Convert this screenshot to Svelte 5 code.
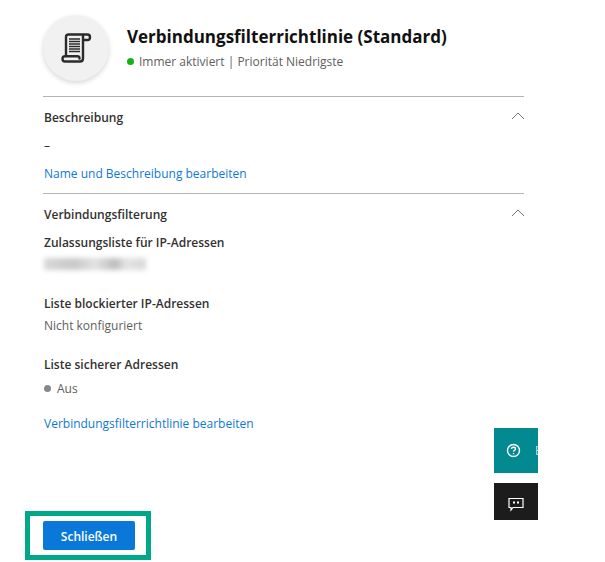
<script>
  const sections = [
    { label: 'Zulassungsliste für IP-Adressen', blurred: true },
    { label: 'Liste blockierter IP-Adressen', value: 'Nicht konfiguriert' },
    { label: 'Liste sicherer Adressen', value: 'Aus', dot: true }
  ];
</script>

<div class="page">
  <main class="panel">
    <header class="head">
      <div class="avatar">
        <svg width="34" height="34" viewBox="0 0 34 34" fill="none" stroke="#2b2b2b" stroke-width="2.400" stroke-linejoin="round" stroke-linecap="round">
          <path d="M7 25V6C7 4.500 8 3.500 9.500 3.500H28.500C30 3.500 31 4.600 31 6.200C31 7.800 30 9 28.500 9H24.500" />
          <path d="M24 4V27.500C24 29.500 23 30.500 21 30.500H6C4.500 30.500 3.500 29.300 3.500 27.800C3.500 26.300 4.500 25.200 6 25.200H18.500C20 25.200 20.500 26.500 20.500 27.500" />
          <path d="M10 8H21M10 10.500H21M10 13H21M10 15.500H21M10 18H21M10 20.500H21" stroke-width="1.600" stroke-linecap="butt" />
        </svg>
      </div>
      <div class="head-text">
        <h1>Verbindungsfilterrichtlinie (Standard)</h1>
        <p class="status"><span class="dot green"></span>Immer aktiviert | Priorität Niedrigste</p>
      </div>
    </header>

    <section class="desc">
      <div class="sec-head">
        <h2>Beschreibung</h2>
        <svg class="chev" width="14" height="8" viewBox="0 0 14 8" fill="none" stroke="#777" stroke-width="1"><path d="M1 7L7 1L13 7" /></svg>
      </div>
      <p class="dash">–</p>
      <a href="#name" class="link">Name und Beschreibung bearbeiten</a>
    </section>

    <section class="filter">
      <div class="sec-head">
        <h2>Verbindungsfilterung</h2>
        <svg class="chev" width="14" height="8" viewBox="0 0 14 8" fill="none" stroke="#777" stroke-width="1"><path d="M1 7L7 1L13 7" /></svg>
      </div>
      {#each sections as s}
        <div class="field">
          <h3>{s.label}</h3>
          {#if s.blurred}
            <div class="smudge"></div>
          {:else}
            <p class="value" class:state={s.dot}>
              {#if s.dot}<span class="dot grey"></span>{/if}{s.value}
            </p>
          {/if}
        </div>
      {/each}
      <a href="#edit" class="link">Verbindungsfilterrichtlinie bearbeiten</a>
    </section>
  </main>

  <div class="float help">
    <svg width="15" height="15" viewBox="0 0 15 15" fill="none" stroke="#fff" stroke-width="1.400">
      <circle cx="7.500" cy="7.500" r="6" />
      <path d="M5.500 6C5.500 4.800 6.400 4.200 7.500 4.200C8.600 4.200 9.500 4.900 9.500 5.900C9.500 7.200 7.500 7.300 7.500 8.800" />
      <path d="M7.500 10V11.200" />
    </svg>
    <span class="cut">E</span>
  </div>
  <div class="float chat">
    <svg width="16" height="15" viewBox="0 0 16 15" fill="none" stroke="#fff" stroke-width="1.200">
      <path d="M1 1.500H15V10.500H5L3 13V10.500H1Z" />
      <path d="M5 5.500H7M9 5.500H11" stroke-width="2" />
    </svg>
  </div>

  <footer class="foot">
    <div class="frame">
      <button type="button">Schließen</button>
    </div>
  </footer>
</div>

<style>
  :global(body) {
    margin: 0;
    background: #fff;
  }

  .page {
    position: relative;
    width: 605px;
    height: 562px;
    overflow: hidden;
    font-family: "Open Sans", "Noto Sans", sans-serif;
    color: #323130;
    font-size: 12px;
  }

  .panel {
    width: 481px;
    margin-left: 43px;
    padding-top: 15px;
  }

  .head {
    display: flex;
    align-items: flex-start;
    gap: 18px;
    height: 81px;
    border-bottom: 1px solid #b4b4b4;
  }

  .avatar {
    flex: none;
    width: 66px;
    height: 66px;
    border-radius: 50%;
    background: #f1f1f1;
    box-shadow: 0 2px 5px rgba(0, 0, 0, 0.16);
    display: flex;
    align-items: center;
    justify-content: center;
  }

  .head-text {
    padding-top: 10px;
  }

  h1 {
    margin: 0;
    font-size: 17px;
    line-height: 24px;
    font-weight: 700;
    color: #111;
  }

  .status {
    margin: 4px 0 0;
    line-height: 18px;
    color: #605e5c;
  }

  .dot {
    display: inline-block;
    width: 7px;
    height: 7px;
    border-radius: 50%;
    vertical-align: 1px;
    margin-right: 5px;
  }

  .green {
    background: #12b312;
  }

  .grey {
    background: #8a8886;
    margin-right: 6px;
  }

  .sec-head {
    display: flex;
    align-items: center;
    justify-content: space-between;
  }

  .chev {
    margin-right: -1px;
    position: relative;
    top: -2px;
  }

  h2 {
    margin: 0;
    font-size: 12px;
    line-height: 18px;
    font-weight: 600;
    color: #323130;
  }

  .desc {
    padding: 12px 0 0 1px;
    height: 84px;
    border-bottom: 1px solid #b4b4b4;
  }

  .dash {
    margin: 10px 0 0;
    line-height: 18px;
  }

  .link {
    display: block;
    color: #0f78d4;
    text-decoration: none;
    line-height: 18px;
  }

  .desc .link {
    margin-top: 10px;
  }

  .filter {
    padding: 12px 0 0 1px;
  }

  .field {
    margin-bottom: 21px;
  }

  .field:last-of-type {
    margin-bottom: 17px;
  }

  h3 {
    margin: 10px 0 0;
    font-size: 12px;
    line-height: 18px;
    font-weight: 600;
    color: #323130;
  }

  .value {
    margin: 4px 0 0;
    line-height: 18px;
    color: #605e5c;
  }

  .value.state {
    margin-top: 6px;
  }

  .smudge {
    width: 102px;
    height: 12px;
    margin-top: 6px;
    margin-bottom: 25px;
    background: linear-gradient(90deg, #d8d8d8, #c8c8c8 30%, #e2e2e2 50%, #bcbcbc 70%, #e4e4e4 80%, #d8d8d8);
    filter: blur(2.500px);
  }

  .float {
    position: absolute;
    left: 494px;
    width: 44px;
    display: flex;
    align-items: center;
    overflow: hidden;
    box-sizing: border-box;
    padding-left: 12px;
  }

  .float svg {
    flex: none;
  }

  .help {
    top: 428px;
    height: 45px;
    background: #038a90;
    color: #fff;
  }

  .cut {
    margin-left: 14px;
    font-size: 12px;
    opacity: 0.7;
  }

  .chat {
    top: 483px;
    height: 37px;
    background: #1c1c1c;
    padding: 6px 0 0 14px;
  }

  .foot {
    position: absolute;
    left: 25px;
    top: 511px;
  }

  .frame {
    box-sizing: border-box;
    width: 126px;
    height: 49px;
    border: 5px solid #00a88a;
    padding: 5px 0 0 13px;
  }

  button {
    display: block;
    width: 92px;
    height: 29px;
    border: none;
    border-radius: 2px;
    background: #0a78d9;
    color: #fff;
    font: 600 12px "Open Sans", "Noto Sans", sans-serif;
    padding: 2px 0 0;
  }
</style>
